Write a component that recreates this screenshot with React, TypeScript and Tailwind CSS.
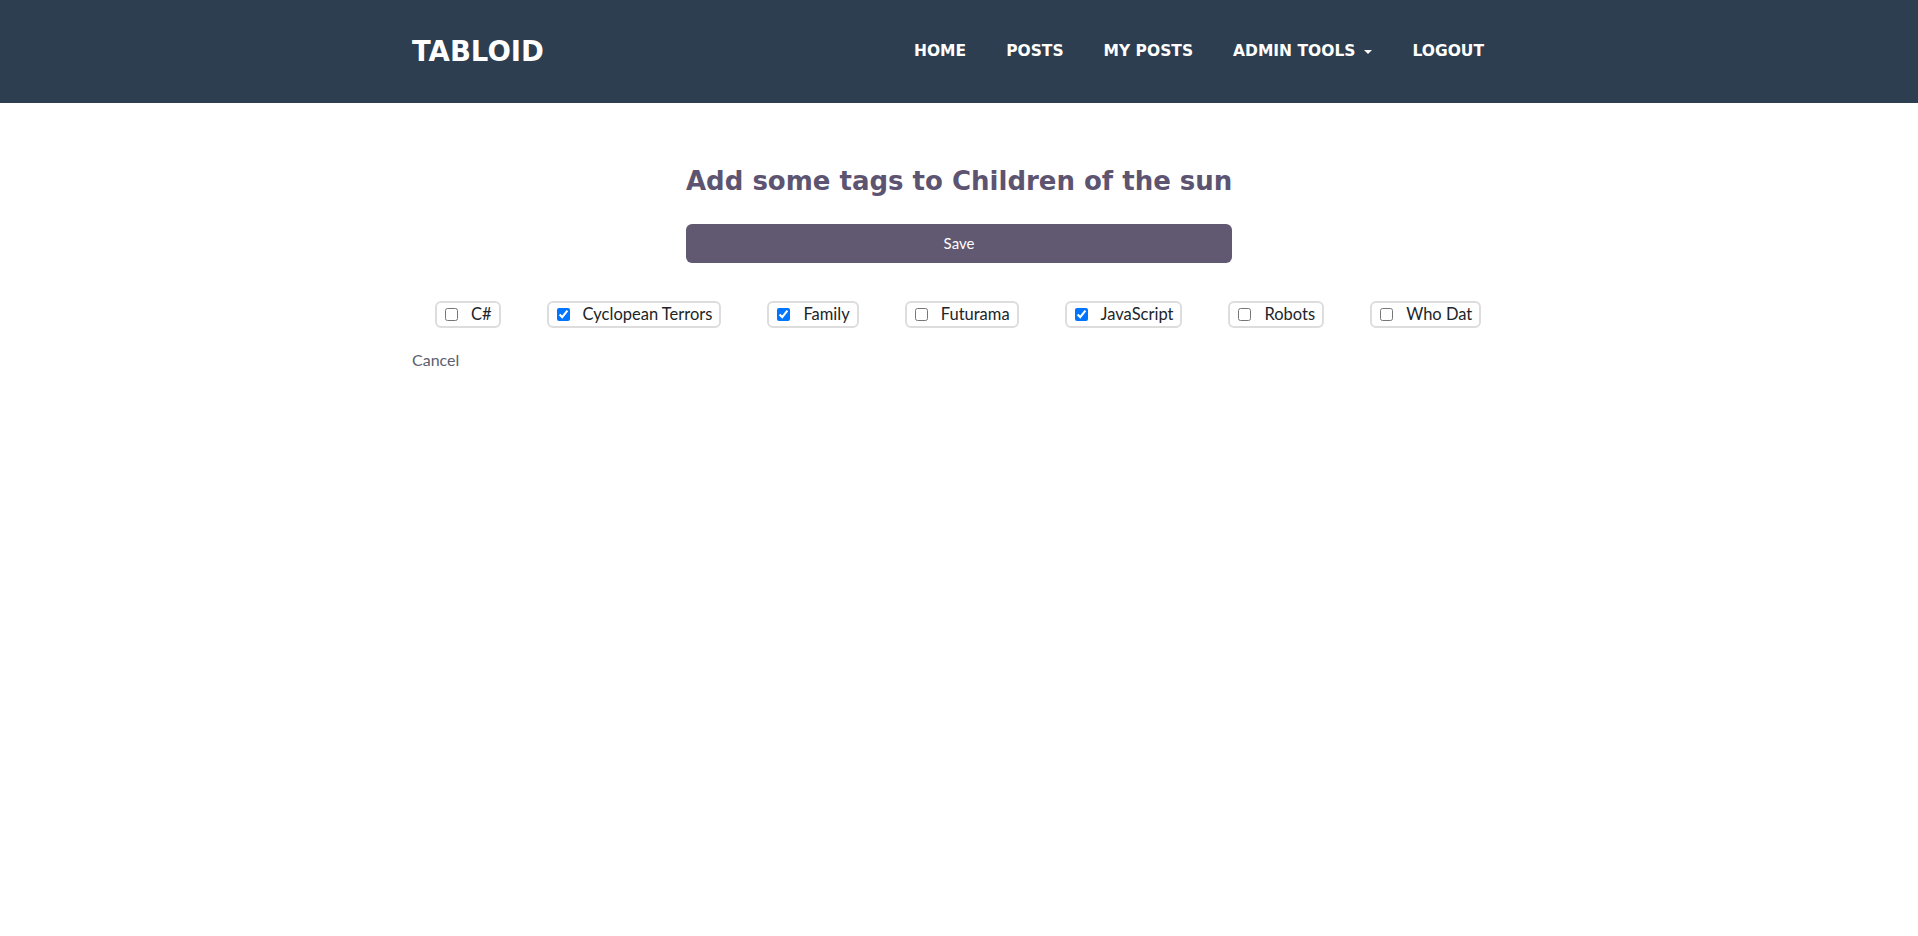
import * as React from "react"

const tags = [
    { id: 1, name: "C#", checked: false },
    { id: 2, name: "Cyclopean Terrors", checked: true },
    { id: 3, name: "Family", checked: true },
    { id: 4, name: "Futurama", checked: false },
    { id: 5, name: "JavaScript", checked: true },
    { id: 6, name: "Robots", checked: false },
    { id: 7, name: "Who Dat", checked: false },
]

const navLinks = ["HOME", "POSTS", "MY POSTS"]

export default function App() {
    const [selected, setSelected] = React.useState<Record<number, boolean>>(
        Object.fromEntries(tags.map((t) => [t.id, t.checked]))
    )

    return (
        <div className="min-h-screen bg-white font-['Lato',sans-serif] text-[#212529]">

            {/* Navbar */}
            <header className="h-[103px] bg-[#2c3e50]">
                <div className="w-[1094px] mx-auto h-full flex items-center justify-between font-['DejaVu_Sans',sans-serif] font-bold text-white">
                    <a className="text-[27.5px] leading-none">TABLOID</a>
                    <nav className="flex items-center text-[15.5px] leading-none">
                        {navLinks.map((link) => (
                            <a key={link} className="px-5">{link}</a>
                        ))}
                        <a className="px-5 flex items-center">
                            ADMIN TOOLS
                            <span className="ml-[9px] inline-block w-0 h-0 border-t-[4.5px] border-t-white border-x-[4.5px] border-x-transparent" />
                        </a>
                        <a className="pl-5 pr-[22px]">LOGOUT</a>
                    </nav>
                </div>
            </header>

            {/* Tag form */}
            <main className="w-[1094px] mx-auto pt-[62px]">
                <div className="w-[546px] mx-auto flex flex-col">
                    <h3 className="text-center whitespace-nowrap font-['DejaVu_Sans',sans-serif] font-bold text-[26px] leading-[1.3] text-[#5c5470]">
                        Add some tags to Children of the sun
                    </h3>
                    <button className="mt-[25px] h-[39px] rounded-[6px] bg-[#615872] text-white text-[15px]">
                        Save
                    </button>
                </div>

                <div className="mt-[38px] flex">
                    {tags.map((tag) => (
                        <label
                            key={tag.id}
                            className="mx-[23px] shrink-0 h-[27px] flex items-center border-2 border-[#dddddd] rounded-[6px] pl-2 pr-[7px] text-[16.5px]"
                        >
                            <input
                                type="checkbox"
                                className="m-0 w-[13px] h-[13px]"
                                checked={selected[tag.id]}
                                onChange={() => setSelected({ ...selected, [tag.id]: !selected[tag.id] })}
                            />
                            <span className="ml-[13px]">{tag.name}</span>
                        </label>
                    ))}
                </div>

                <div className="mt-[20px]">
                    <a className="text-[16px] text-[#5b5e6e] leading-6">Cancel</a>
                </div>
            </main>
        </div>
    )
}
